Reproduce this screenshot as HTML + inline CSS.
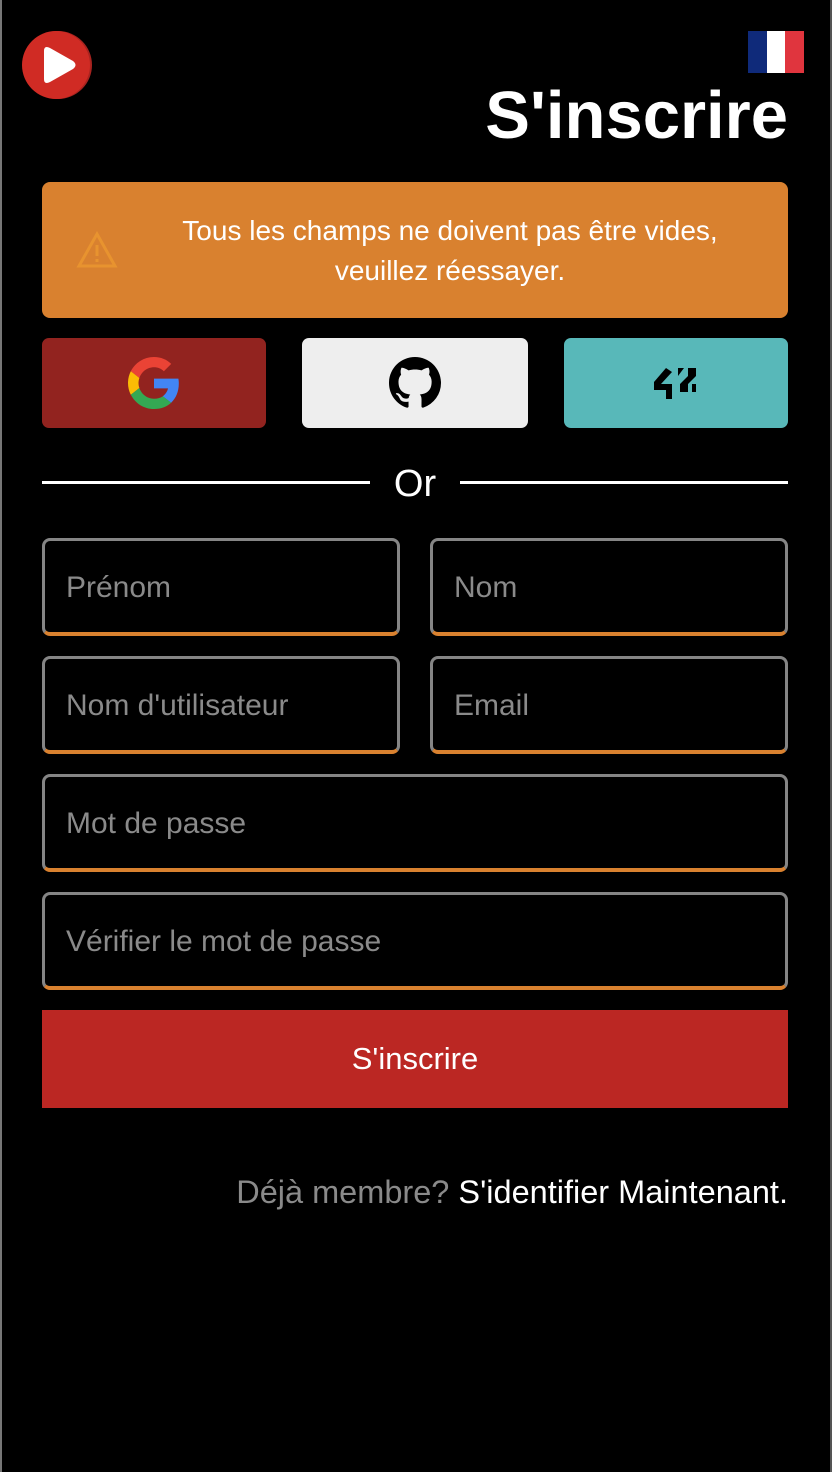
<!DOCTYPE html>
<html><head><meta charset="utf-8"><style>
*{box-sizing:border-box;margin:0;padding:0}
body{width:832px;height:1472px;background:#000;font-family:"Liberation Sans",sans-serif;position:relative;overflow:hidden}
.abs{position:absolute}
.inp{position:absolute;height:98px;border:3px solid #858585;border-bottom:4px solid #d9812f;border-radius:8px;color:#8a8a8a;font-size:30px;padding-left:21px;line-height:94px}
.sb{position:absolute;top:338px;height:90px;border-radius:7px;display:flex;align-items:center;justify-content:center}
</style></head><body>
<div class="abs" style="left:0;top:0;width:2px;height:1472px;background:#777"></div>
<div class="abs" style="right:0;top:0;width:2px;height:1472px;background:#555"></div>
<svg class="abs" style="left:21px;top:29px" width="72" height="72" viewBox="0 0 72 72"><circle cx="37" cy="36" r="34" fill="#a8231f"/><circle cx="35" cy="36" r="34" fill="#d02b24"/><path d="M23 22 Q23 16 29 19 L52 32 Q57 36 52 40 L29 53 Q23 56 23 50Z" fill="#fff"/></svg>
<div class="abs" style="left:748px;top:31px;width:56px;height:42px;display:flex"><div style="flex:1;background:#0f2a7a"></div><div style="flex:1;background:#fff"></div><div style="flex:1;background:#e0353e"></div></div>
<div class="abs" style="right:44px;top:78px;font-size:67px;font-weight:bold;color:#fff;line-height:76px">S'inscrire</div>
<div class="abs" style="left:42px;top:182px;width:746px;height:136px;background:#d9812f;border-radius:8px"></div>
<svg class="abs" style="left:76px;top:231px" width="42" height="38" viewBox="0 0 42 38"><path d="M21 3 L39 35 L3 35Z" fill="none" stroke="#e8932f" stroke-width="3"/><rect x="19.5" y="14" width="3" height="11" fill="#e8932f"/><rect x="19.5" y="28" width="3" height="3" fill="#e8932f"/></svg>
<div class="abs" style="left:120px;top:211px;width:660px;text-align:center;color:#fff;font-size:28px;line-height:40px">Tous les champs ne doivent pas être vides,<br>veuillez réessayer.</div>
<div class="sb" style="left:42px;width:224px;background:#92231f"><svg width="52" height="52" viewBox="0 0 48 48"><path fill="#EA4335" d="M24 9.5c3.5 0 6.6 1.2 9.1 3.6l6.8-6.8C35.8 2.4 30.4 0 24 0 14.6 0 6.6 5.4 2.6 13.2l7.9 6.2C12.4 13.7 17.7 9.5 24 9.5z"/><path fill="#4285F4" d="M46.9 24.5c0-1.6-.1-3.1-.4-4.5H24v9h12.9c-.6 3-2.3 5.5-4.8 7.2l7.7 6c4.5-4.2 7.1-10.3 7.1-17.7z"/><path fill="#FBBC05" d="M10.5 28.6c-.5-1.4-.8-3-.8-4.6s.3-3.2.8-4.6l-7.9-6.2C.9 16.5 0 20.1 0 24s.9 7.5 2.6 10.8l7.9-6.2z"/><path fill="#34A853" d="M24 48c6.5 0 11.9-2.1 15.9-5.8l-7.7-6c-2.2 1.5-5 2.3-8.2 2.3-6.3 0-11.6-4.2-13.5-9.9l-7.9 6.2C6.6 42.6 14.6 48 24 48z"/></svg></div>
<div class="sb" style="left:302px;width:226px;background:#eeeeee"><svg width="52" height="52" viewBox="0 0 16 16"><path fill="#000" d="M8 0C3.58 0 0 3.58 0 8c0 3.54 2.29 6.53 5.47 7.59.4.07.55-.17.55-.38 0-.19-.01-.82-.01-1.49-2.01.37-2.53-.49-2.69-.94-.09-.23-.48-.94-.82-1.13-.28-.15-.68-.52-.01-.53.63-.01 1.08.58 1.23.82.72 1.21 1.87.87 2.33.66.07-.52.28-.87.51-1.07-1.78-.2-3.64-.89-3.64-3.95 0-.87.31-1.59.82-2.15-.08-.2-.36-1.02.08-2.12 0 0 .67-.21 2.2.82.64-.18 1.32-.27 2-.27.68 0 1.36.09 2 .27 1.53-1.04 2.2-.82 2.2-.82.44 1.1.16 1.92.08 2.12.51.56.82 1.27.82 2.15 0 3.07-1.87 3.75-3.65 3.95.29.25.54.73.54 1.48 0 1.07-.01 1.93-.01 2.2 0 .21.15.46.55.38A8.013 8.013 0 0016 8c0-4.42-3.58-8-8-8z"/></svg></div>
<div class="sb" style="left:564px;width:224px;background:#58b8b9"><svg width="48" height="34" viewBox="0 0 48 34"><path d="M14 2 L2 16 L2 24 L14 24 L14 33 L20 33 L20 18 L9 18 L20 6Z M26 2 L26 10 L32 2Z M36 2 L36 10 L28 18 L28 26 L36 26 L36 18 L44 10 L44 2Z M40 18 L40 26 L44 26 L44 18Z" fill="#000"/></svg></div>
<div class="abs" style="left:42px;top:481px;width:328px;height:3px;background:#fff"></div>
<div class="abs" style="left:460px;top:481px;width:328px;height:3px;background:#fff"></div>
<div class="abs" style="left:370px;top:462px;width:90px;text-align:center;color:#fff;font-size:38px;line-height:44px">Or</div>
<div class="inp" style="left:42px;top:538px;width:358px">Prénom</div>
<div class="inp" style="left:430px;top:538px;width:358px">Nom</div>
<div class="inp" style="left:42px;top:656px;width:358px">Nom d'utilisateur</div>
<div class="inp" style="left:430px;top:656px;width:358px">Email</div>
<div class="inp" style="left:42px;top:774px;width:746px">Mot de passe</div>
<div class="inp" style="left:42px;top:892px;width:746px">Vérifier le mot de passe</div>
<div class="abs" style="left:42px;top:1010px;width:746px;height:98px;background:#bb2723;color:#fff;font-size:31px;text-align:center;line-height:98px">S'inscrire</div>
<div class="abs" style="right:44px;top:1172px;font-size:32.5px;color:#8a8a8a;line-height:40px;white-space:nowrap">Déjà membre? <span style="color:#fff">S'identifier Maintenant.</span></div>
</body></html>
